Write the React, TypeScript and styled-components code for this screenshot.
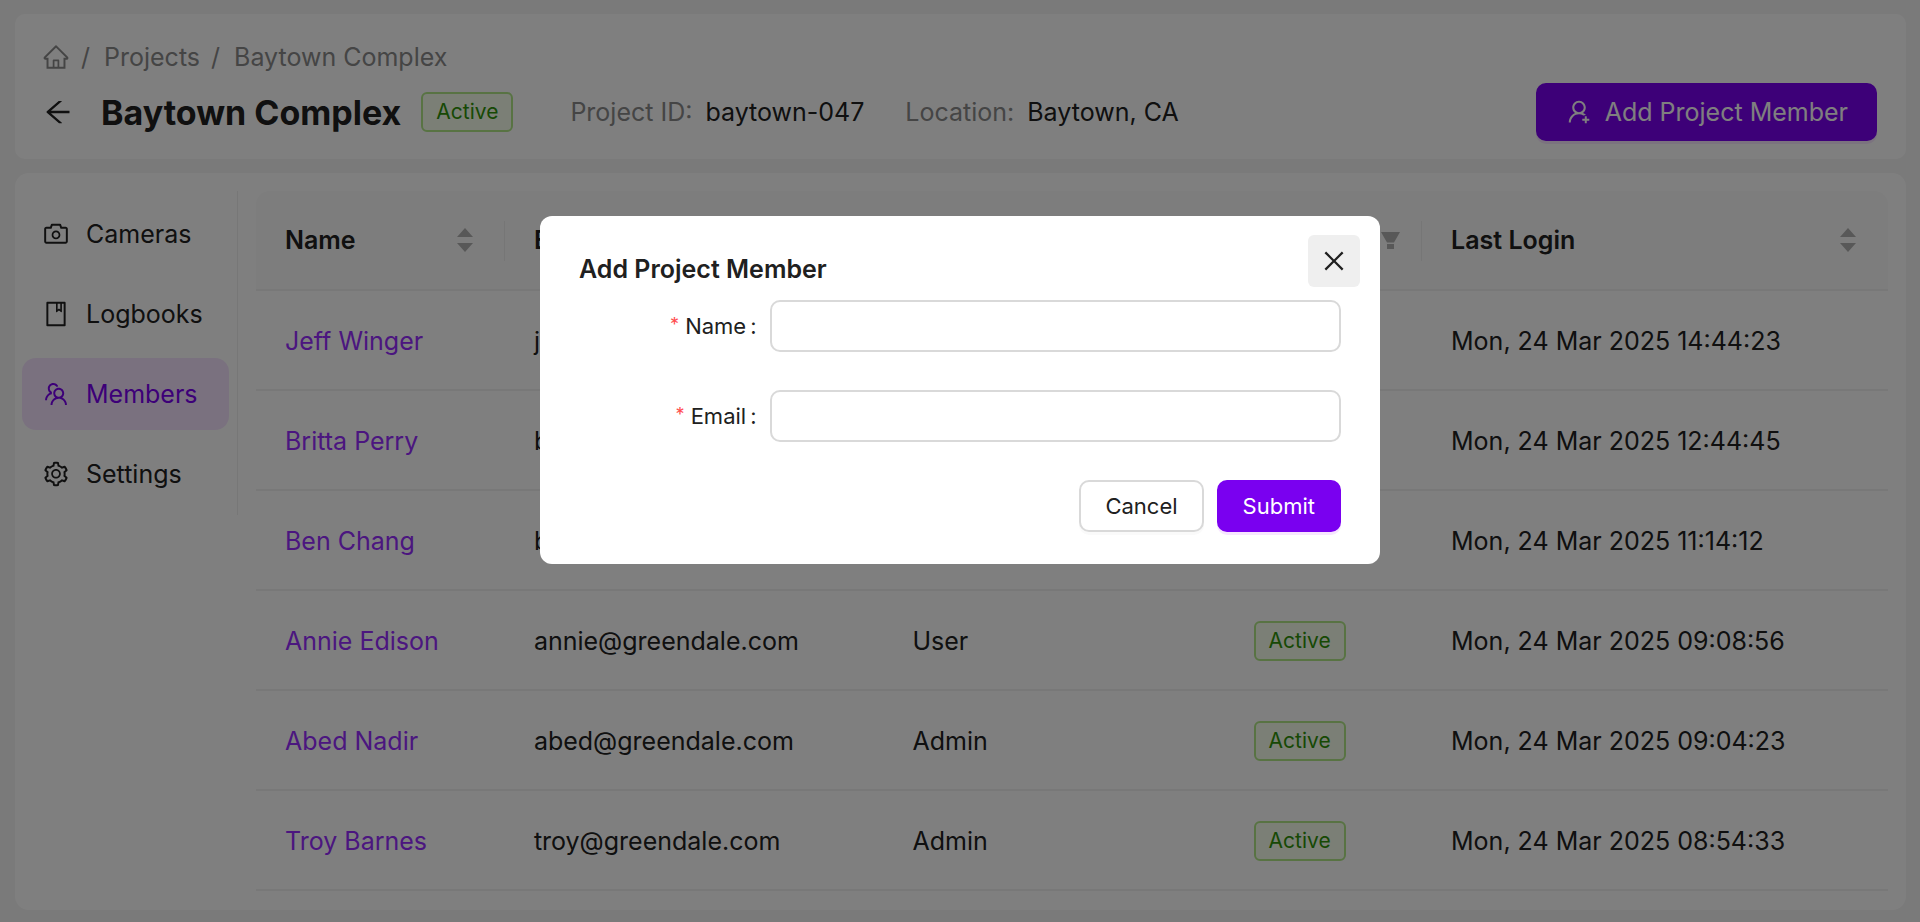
import React from "react";
import styled, { createGlobalStyle } from "styled-components";
import {
  AiOutlineArrowLeft,
  AiOutlineBook,
  AiOutlineCamera,
  AiOutlineClose,
  AiOutlineHome,
  AiOutlineSetting,
  AiOutlineTeam,
  AiOutlineUserAdd,
} from "react-icons/ai";

const GlobalStyle = createGlobalStyle`
  *, *::before, *::after { box-sizing: border-box; }
  body {
    margin: 0;
    background: #f5f5f5;
    color: #202020;
    font-family: Inter, "Liberation Sans", sans-serif;
    font-size: 25px;
    line-height: 32px;
  }
  button, input { font: inherit; color: inherit; }
  h1, h2, ul, ol, dl, dd { margin: 0; padding: 0; list-style: none; }
  svg { display: block; flex: none; }
`;

const Page = styled.div`
  display: flex;
  flex-direction: column;
  gap: 14px;
  min-height: 100vh;
  padding: 14px 14px 12px 15px;
`;

const HeaderCard = styled.header`
  display: flex;
  flex-direction: column;
  gap: 10px;
  padding: 27px 29px 18px 27px;
  border-radius: 10px;
  background: #fff;
`;

const Crumbs = styled.ol`
  display: flex;
  align-items: center;
  gap: 11px;
  color: #8a8a8a;

  li { display: flex; align-items: center; gap: 14px; }
  li + li::before { content: "/"; }
  a { color: inherit; text-decoration: none; }
`;

const TitleRow = styled.div`
  display: flex;
  align-items: center;
  min-height: 58px;
`;

const BackButton = styled.button`
  padding: 0;
  margin-right: 27px;
  border: 0;
  background: none;
  font-size: 32px;
  cursor: pointer;
`;

const Title = styled.h1`
  margin-right: 20px;
  padding-top: 2px;
  font-size: 34px;
  line-height: 44px;
  font-weight: 700;
`;

const Tag = styled.span`
  display: inline-block;
  padding: 0 13px;
  border: 2px solid #b0e687;
  border-radius: 6px;
  background: #f6ffed;
  color: #2f9209;
  font-size: 21px;
  line-height: 36px;
  vertical-align: middle;
`;

const Facts = styled.dl`
  display: flex;
  gap: 41px;
  margin-left: 57px;

  div { display: flex; gap: 13px; }
  dt { color: #8a8a8a; }
`;

const Button = styled.button<{ $primary?: boolean; $large?: boolean }>`
  display: flex;
  align-items: center;
  justify-content: center;
  gap: 12px;
  height: ${(p) => (p.$large ? 58 : 52)}px;
  padding: 0 ${(p) => (p.$large ? 27 : 24)}px;
  border: 2px solid ${(p) => (p.$primary ? "#7a00f0" : "#d9d9d9")};
  border-radius: 10px;
  background: ${(p) => (p.$primary ? "#7a00f0" : "#fff")};
  box-shadow: 0 3px 0 ${(p) => (p.$primary ? "#f7e6ff" : "#fafafa")};
  color: ${(p) => (p.$primary ? "#fff" : "#202020")};
  font-size: ${(p) => (p.$large ? 25 : 22)}px;
  white-space: nowrap;
  cursor: pointer;
`;

const HeaderAction = styled.div`
  margin-left: auto;
`;

const Body = styled.main`
  display: flex;
  align-items: flex-start;
  flex: 1;
  padding: 18px 18px 18px 0;
  border-radius: 14px;
  background: #fff;
`;

const SideNav = styled.nav`
  flex: none;
  width: 223px;
  margin-right: 18px;
  padding: 7px 8px 5px 7px;
  border-right: 1px solid #efefef;

  ul { display: flex; flex-direction: column; gap: 8px; }
`;

const NavLink = styled.a<{ $active?: boolean }>`
  display: flex;
  align-items: center;
  gap: 16px;
  height: 72px;
  padding-left: 20px;
  border-radius: 14px;
  background: ${(p) => (p.$active ? "#f5e3ff" : "transparent")};
  color: ${(p) => (p.$active ? "#7a00f0" : "#202020")};
  text-decoration: none;
`;

const Members = styled.table`
  flex: 1;
  width: 100%;
  min-width: 0;
  table-layout: fixed;
  border-collapse: separate;
  border-spacing: 0;
  text-align: left;
`;

const Cell = styled.td`
  height: 100px;
  padding: 2px 29px 0;
  border-bottom: 2px solid #f0f0f0;
  white-space: nowrap;
`;

const HeadCell = styled.th<{ $filter?: boolean }>`
  position: relative;
  height: 100px;
  padding: 0 ${(p) => (p.$filter ? 22 : 32)}px 0 29px;
  border-bottom: 2px solid #f0f0f0;
  background: #fafafa;
  font-weight: 600;

  &:first-child { border-top-left-radius: 14px; }
  &:last-child { border-top-right-radius: 14px; }
  &:not(:last-child)::after {
    content: "";
    position: absolute;
    top: 30px;
    right: 0;
    width: 1px;
    height: 40px;
    background: #ececec;
  }
`;

const HeadLabel = styled.div`
  display: flex;
  align-items: center;
  justify-content: space-between;
`;

const MemberLink = styled.a`
  color: #962cff;
  text-decoration: none;
`;

const Mask = styled.div`
  position: fixed;
  inset: 0;
  display: flex;
  align-items: flex-start;
  justify-content: center;
  padding-top: 216px;
  background: rgba(0, 0, 0, 0.5);
`;

const Dialog = styled.section`
  position: relative;
  width: 840px;
  padding: 35px 39px 32px;
  border-radius: 12px;
  background: #fff;
`;

const DialogTitle = styled.h2`
  margin-bottom: 13px;
  font-size: 25px;
  line-height: 36px;
  font-weight: 600;
`;

const CloseButton = styled.button`
  position: absolute;
  top: 19px;
  right: 20px;
  display: grid;
  place-items: center;
  width: 52px;
  height: 52px;
  padding: 0;
  border: 0;
  border-radius: 6px;
  background: #efefef;
  font-size: 28px;
  cursor: pointer;
`;

const Field = styled.div`
  display: grid;
  grid-template-columns: 1fr 3fr;
  align-items: center;
  margin-bottom: 38px;
  font-size: 22px;
`;

const FieldLabel = styled.label`
  display: flex;
  justify-content: flex-end;
  padding-right: 13px;

  &::before {
    content: "*";
    margin-right: 6px;
    color: #ff4d4f;
    font-size: 18px;
    line-height: 30px;
  }
  &::after {
    content: ":";
    margin-left: 4px;
  }
`;

const TextInput = styled.input`
  width: 100%;
  height: 52px;
  padding: 0 14px;
  border: 2px solid #d9d9d9;
  border-radius: 10px;
  background: #fff;
  outline: none;
`;

const DialogActions = styled.div`
  display: flex;
  justify-content: flex-end;
  gap: 13px;
`;

const Sorter = () => (
  <svg width="16" height="24" viewBox="0 0 16 24" fill="#b0b0b0" aria-hidden="true">
    <path d="M8 0 L16 9 H0 Z M0 15 H16 L8 24 Z" />
  </svg>
);

const Funnel = () => (
  <svg width="19" height="17" viewBox="0 0 19 17" fill="#b0b0b0" aria-hidden="true">
    <path d="M0 0 H19 L13 10.500 H6 Z M6 12 H13 V17 H6 Z" />
  </svg>
);

const columns = [
  { label: "Name", width: "15.25%" },
  { label: "Email", width: "23.2%" },
  { label: "Role", width: "20.9%", filter: true },
  { label: "Status", width: "12.1%", filter: true },
  { label: "Last Login", width: "28.55%" },
];

const members = [
  { name: "Jeff Winger", email: "jeff@greendale.com", role: "Admin", login: "Mon, 24 Mar 2025 14:44:23" },
  { name: "Britta Perry", email: "britta@greendale.com", role: "User", login: "Mon, 24 Mar 2025 12:44:45" },
  { name: "Ben Chang", email: "ben@greendale.com", role: "User", login: "Mon, 24 Mar 2025 11:14:12" },
  { name: "Annie Edison", email: "annie@greendale.com", role: "User", login: "Mon, 24 Mar 2025 09:08:56" },
  { name: "Abed Nadir", email: "abed@greendale.com", role: "Admin", login: "Mon, 24 Mar 2025 09:04:23" },
  { name: "Troy Barnes", email: "troy@greendale.com", role: "Admin", login: "Mon, 24 Mar 2025 08:54:33" },
];

const navItems = [
  { label: "Cameras", Icon: AiOutlineCamera },
  { label: "Logbooks", Icon: AiOutlineBook },
  { label: "Members", Icon: AiOutlineTeam, active: true },
  { label: "Settings", Icon: AiOutlineSetting },
];

export default function App() {
  return (
    <>
      <GlobalStyle />
      <Page>
        <HeaderCard>
          <Crumbs>
            <li>
              <a href="#home" aria-label="Home">
                <AiOutlineHome size={28} />
              </a>
            </li>
            <li><a href="#projects">Projects</a></li>
            <li><a href="#baytown">Baytown Complex</a></li>
          </Crumbs>
          <TitleRow>
            <BackButton aria-label="Back">
              <AiOutlineArrowLeft />
            </BackButton>
            <Title>Baytown Complex</Title>
            <Tag>Active</Tag>
            <Facts>
              <div><dt>Project ID:</dt><dd>baytown-047</dd></div>
              <div><dt>Location:</dt><dd>Baytown, CA</dd></div>
            </Facts>
            <HeaderAction>
              <Button $primary $large>
                <AiOutlineUserAdd size={28} />
                Add Project Member
              </Button>
            </HeaderAction>
          </TitleRow>
        </HeaderCard>
        <Body>
          <SideNav>
            <ul>
              {navItems.map(({ label, Icon, active }) => (
                <li key={label}>
                  <NavLink href={`#${label.toLowerCase()}`} $active={active}>
                    <Icon size={28} />
                    {label}
                  </NavLink>
                </li>
              ))}
            </ul>
          </SideNav>
          <Members>
            <colgroup>
              {columns.map((c) => <col key={c.label} width={c.width} />)}
            </colgroup>
            <thead>
              <tr>
                {columns.map((c) => (
                  <HeadCell key={c.label} scope="col" $filter={c.filter}>
                    <HeadLabel>
                      {c.label}
                      {c.filter ? <Funnel /> : <Sorter />}
                    </HeadLabel>
                  </HeadCell>
                ))}
              </tr>
            </thead>
            <tbody>
              {members.map((m) => (
                <tr key={m.name}>
                  <Cell><MemberLink href="#member">{m.name}</MemberLink></Cell>
                  <Cell>{m.email}</Cell>
                  <Cell>{m.role}</Cell>
                  <Cell><Tag>Active</Tag></Cell>
                  <Cell>{m.login}</Cell>
                </tr>
              ))}
            </tbody>
          </Members>
        </Body>
      </Page>
      <Mask>
        <Dialog role="dialog" aria-modal="true" aria-labelledby="dialog-title">
          <DialogTitle id="dialog-title">Add Project Member</DialogTitle>
          <CloseButton aria-label="Close">
            <AiOutlineClose />
          </CloseButton>
          <form onSubmit={(e) => e.preventDefault()}>
            <Field>
              <FieldLabel htmlFor="member-name">Name</FieldLabel>
              <TextInput id="member-name" type="text" required />
            </Field>
            <Field>
              <FieldLabel htmlFor="member-email">Email</FieldLabel>
              <TextInput id="member-email" type="email" required />
            </Field>
            <DialogActions>
              <Button type="button">Cancel</Button>
              <Button type="submit" $primary>Submit</Button>
            </DialogActions>
          </form>
        </Dialog>
      </Mask>
    </>
  );
}
